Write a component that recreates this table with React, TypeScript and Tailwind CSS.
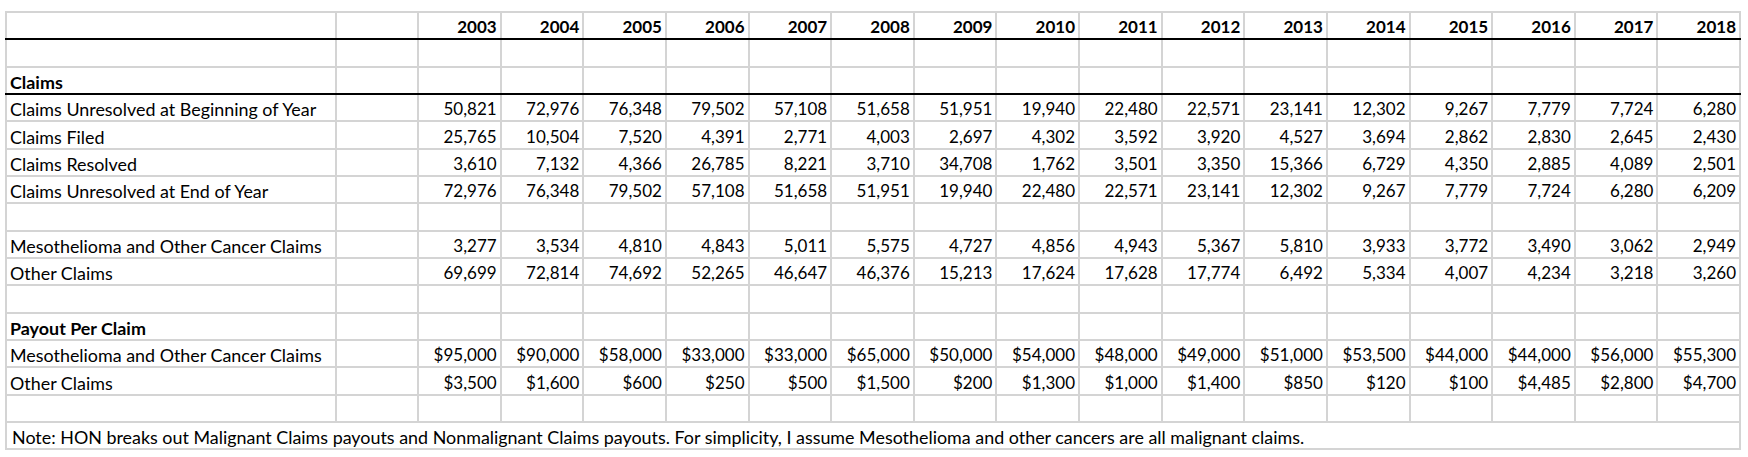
const years = [2003, 2004, 2005, 2006, 2007, 2008, 2009, 2010, 2011, 2012, 2013, 2014, 2015, 2016, 2017, 2018];

type Row = { label?: string; bold?: boolean; values?: string[]; line?: boolean };

const rows: Row[] = [
  {},
  { label: "Claims", bold: true, line: true },
  {
    label: "Claims Unresolved at Beginning of Year",
    values: ["50,821", "72,976", "76,348", "79,502", "57,108", "51,658", "51,951", "19,940", "22,480", "22,571", "23,141", "12,302", "9,267", "7,779", "7,724", "6,280"],
  },
  {
    label: "Claims Filed",
    values: ["25,765", "10,504", "7,520", "4,391", "2,771", "4,003", "2,697", "4,302", "3,592", "3,920", "4,527", "3,694", "2,862", "2,830", "2,645", "2,430"],
  },
  {
    label: "Claims Resolved",
    values: ["3,610", "7,132", "4,366", "26,785", "8,221", "3,710", "34,708", "1,762", "3,501", "3,350", "15,366", "6,729", "4,350", "2,885", "4,089", "2,501"],
  },
  {
    label: "Claims Unresolved at End of Year",
    values: ["72,976", "76,348", "79,502", "57,108", "51,658", "51,951", "19,940", "22,480", "22,571", "23,141", "12,302", "9,267", "7,779", "7,724", "6,280", "6,209"],
  },
  {},
  {
    label: "Mesothelioma and Other Cancer Claims",
    values: ["3,277", "3,534", "4,810", "4,843", "5,011", "5,575", "4,727", "4,856", "4,943", "5,367", "5,810", "3,933", "3,772", "3,490", "3,062", "2,949"],
  },
  {
    label: "Other Claims",
    values: ["69,699", "72,814", "74,692", "52,265", "46,647", "46,376", "15,213", "17,624", "17,628", "17,774", "6,492", "5,334", "4,007", "4,234", "3,218", "3,260"],
  },
  {},
  { label: "Payout Per Claim", bold: true },
  {
    label: "Mesothelioma and Other Cancer Claims",
    values: ["$95,000", "$90,000", "$58,000", "$33,000", "$33,000", "$65,000", "$50,000", "$54,000", "$48,000", "$49,000", "$51,000", "$53,500", "$44,000", "$44,000", "$56,000", "$55,300"],
  },
  {
    label: "Other Claims",
    values: ["$3,500", "$1,600", "$600", "$250", "$500", "$1,500", "$200", "$1,300", "$1,000", "$1,400", "$850", "$120", "$100", "$4,485", "$2,800", "$4,700"],
  },
  {},
];

export default function App() {
  return (
    <div className="min-h-screen bg-white pt-[11px] pl-[5px] font-['Lato',sans-serif] text-black">
      <table className="w-[1734px] table-fixed border-collapse">
        <colgroup>
          <col className="w-[330px]" />
          <col className="w-[82px]" />
          {years.map((y) => (
            <col key={y} className="w-[82.625px]" />
          ))}
        </colgroup>
        <tbody>
          {/* years */}
          <tr className="h-[27.33px]">
            <td className="border-2 border-[#d4d4d4] border-b-black" />
            <td className="border-2 border-[#d4d4d4] border-b-black" />
            {years.map((y) => (
              <td
                key={y}
                className="border-2 border-[#d4d4d4] border-b-black pr-[3px] pb-[1px] text-right align-bottom text-[17px] font-bold leading-[20px]"
              >
                {y}
              </td>
            ))}
          </tr>
          {rows.map((r, i) => {
            const b = r.line ? "border-2 border-[#d4d4d4] border-b-black" : "border-2 border-[#d4d4d4]";
            return (
              <tr key={i} className="h-[27.33px]">
                <td className={`${b} pl-[3px] pb-[1px] align-bottom text-[17.9px] leading-[20px] whitespace-nowrap ${r.bold ? "font-bold" : ""}`}>
                  {r.label ?? ""}
                </td>
                <td className={b} />
                {years.map((y, j) => (
                  <td key={y} className={`${b} pr-[3px] pb-[1px] text-right align-bottom text-[17px] leading-[20px] whitespace-nowrap`}>
                    {r.values ? r.values[j] : ""}
                  </td>
                ))}
              </tr>
            );
          })}
          <tr className="h-[27.33px]">
            <td colSpan={18} className="border-2 border-[#d4d4d4] pl-[5px] pb-[1px] align-bottom text-[17.9px] leading-[20px] whitespace-nowrap">
              Note: HON breaks out Malignant Claims payouts and Nonmalignant Claims payouts. For simplicity, I assume Mesothelioma and other cancers are all malignant claims.
            </td>
          </tr>
        </tbody>
      </table>
    </div>
  );
}
